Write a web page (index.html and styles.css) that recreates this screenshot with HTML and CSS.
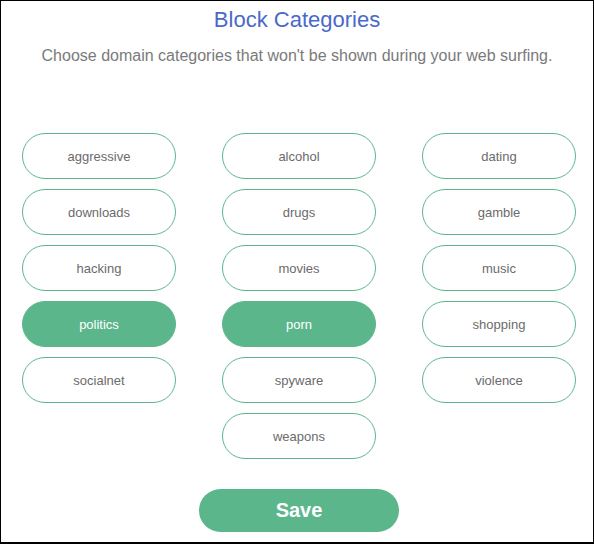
FILE: index.html
```html
<!DOCTYPE html>
<html>
<head>
<meta charset="utf-8">
<link rel="stylesheet" href="styles.css">
</head>
<body>
<div class="frame">
  <h1 class="title">Block Categories</h1>
  <p class="subtitle">Choose domain categories that won't be shown during your web surfing.</p>
  <div class="grid">
    <button class="cat">aggressive</button>
    <button class="cat">alcohol</button>
    <button class="cat">dating</button>
    <button class="cat">downloads</button>
    <button class="cat">drugs</button>
    <button class="cat">gamble</button>
    <button class="cat">hacking</button>
    <button class="cat">movies</button>
    <button class="cat">music</button>
    <button class="cat active">politics</button>
    <button class="cat active">porn</button>
    <button class="cat">shopping</button>
    <button class="cat">socialnet</button>
    <button class="cat">spyware</button>
    <button class="cat">violence</button>
    <button class="cat center">weapons</button>
  </div>
  <div class="actions">
    <button class="save">Save</button>
  </div>
</div>
</body>
</html>
```

FILE: styles.css
```css
html, body {
  margin: 0;
  padding: 0;
  background: #fff;
}
.frame {
  box-sizing: border-box;
  width: 594px;
  height: 544px;
  border: 1px solid #000;
  border-bottom-width: 2px;
  font-family: "Liberation Sans", Arial, sans-serif;
  overflow: hidden;
}
.title {
  margin: 6px 0 0;
  text-align: center;
  font-size: 22px;
  font-weight: normal;
  line-height: 26px;
  color: #4a69c9;
}
.subtitle {
  margin: 13px 0 0;
  text-align: center;
  font-size: 16px;
  line-height: 20px;
  color: #7a7a7a;
}
.grid {
  display: grid;
  grid-template-columns: repeat(3, 154px);
  grid-auto-rows: 46px;
  column-gap: 46px;
  row-gap: 10px;
  margin: 67px 0 0 21px;
}
.cat {
  box-sizing: border-box;
  border: 1px solid #5cb68c;
  border-radius: 23px;
  background: #fff;
  color: #6b6b6b;
  font-family: "Liberation Sans", Arial, sans-serif;
  font-size: 13px;
  padding: 0;
}
.cat.active {
  background: #5cb68c;
  color: #fff;
}
.cat.center {
  grid-column: 2;
}
.actions {
  display: flex;
  justify-content: center;
  margin-top: 30px;
  padding-left: 4px;
}
.save {
  width: 200px;
  height: 43px;
  border: none;
  border-radius: 22px;
  background: #5cb68c;
  color: #fff;
  font-family: "Liberation Sans", Arial, sans-serif;
  font-size: 20px;
  font-weight: bold;
}
```
